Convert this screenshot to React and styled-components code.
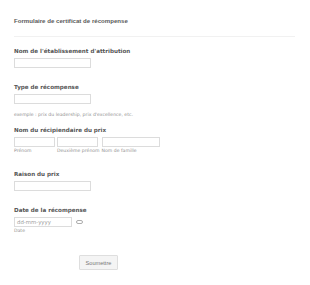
import React from 'react'
import styled, { createGlobalStyle } from 'styled-components'

const GlobalStyle = createGlobalStyle`
  html, body { margin: 0; padding: 0; background: #fff; }
  body { font-family: "DejaVu Sans", Verdana, sans-serif; }
  * { box-sizing: border-box; }
`

const Page = styled.div`
  width: 310px;
  height: 285px;
  padding: 15px 15px 0 14px;
`

const Header = styled.div`
  border-bottom: 1px solid #f1f1f1;
  padding: 1px 0 11px;
  margin-bottom: 10px;
`

const Title = styled.h1`
  margin: 0;
  font-family: "Liberation Sans", Arial, sans-serif;
  font-size: 6.1px;
  font-weight: bold;
  line-height: 9px;
  color: #5a5a5a;
`

const Field = styled.div`
  display: flex;
  flex-direction: column;
  align-items: flex-start;
  margin-bottom: ${p => p.$space ?? 15}px;
`

const Label = styled.label`
  font-size: 5.6px;
  font-weight: bold;
  line-height: 8px;
  color: #555;
  margin-bottom: 3px;
`

const Input = styled.div`
  width: ${p => p.$w || 77}px;
  height: 10px;
  border: 1px solid #dcdcdc;
  background: #fff;
  font-size: 5.4px;
  line-height: 8px;
  padding-left: 2px;
  color: #a0a0a0;
`

const Hint = styled.div`
  font-size: 4.6px;
  line-height: 6px;
  color: #8f8f8f;
  white-space: nowrap;
  margin-top: ${p => p.$top ?? 1}px;
`

const Row = styled.div`
  display: flex;
  gap: ${p => p.$gap ?? 2}px;
  align-items: ${p => p.$align || 'flex-start'};
`

const Col = styled.div`
  display: flex;
  flex-direction: column;
`

const DateIcon = styled.svg`
  width: 7px;
  height: 4px;
  margin-left: 2px;
`

const Footer = styled.div`
  display: flex;
  padding-left: 65px;
  padding-top: 21px;
`

const Button = styled.button`
  width: 39px;
  height: 15px;
  padding: 0;
  border: 1px solid #dedede;
  background: #f4f4f4;
  font-family: "Liberation Sans", Arial, sans-serif;
  font-size: 5.6px;
  color: #777;
  border-radius: 1px;
`

export default function App() {
  return (
    <>
      <GlobalStyle />
      <Page>
        <Header>
          <Title>Formulaire de certificat de récompense</Title>
        </Header>

        <Field>
          <Label>Nom de l'établissement d'attribution</Label>
          <Input />
        </Field>

        <Field $space={8}>
          <Label>Type de récompense</Label>
          <Input />
          <Hint $top={8}>exemple : prix du leadership, prix d'excellence, etc.</Hint>
        </Field>

        <Field $space={16}>
          <Label>Nom du récipiendaire du prix</Label>
          <Row>
            <Col>
              <Input $w={41} />
              <Hint>Prénom</Hint>
            </Col>
            <Col>
              <Input $w={41} />
              <Hint>Deuxième prénom</Hint>
            </Col>
            <Col>
              <Input $w={58} />
              <Hint>Nom de famille</Hint>
            </Col>
          </Row>
        </Field>

        <Field>
          <Label>Raison du prix</Label>
          <Input />
        </Field>

        <Field $space={0}>
          <Label>Date de la récompense</Label>
          <Row $align="center">
            <Input $w={58}>dd-mm-yyyy</Input>
            <DateIcon viewBox="0 0 7 4">
              <rect x="0.5" y="0.5" width="6" height="3" rx="1.5" fill="none" stroke="#999" strokeWidth="0.8" />
            </DateIcon>
          </Row>
          <Hint>Date</Hint>
        </Field>

        <Footer>
          <Button>Soumettre</Button>
        </Footer>
      </Page>
    </>
  )
}
